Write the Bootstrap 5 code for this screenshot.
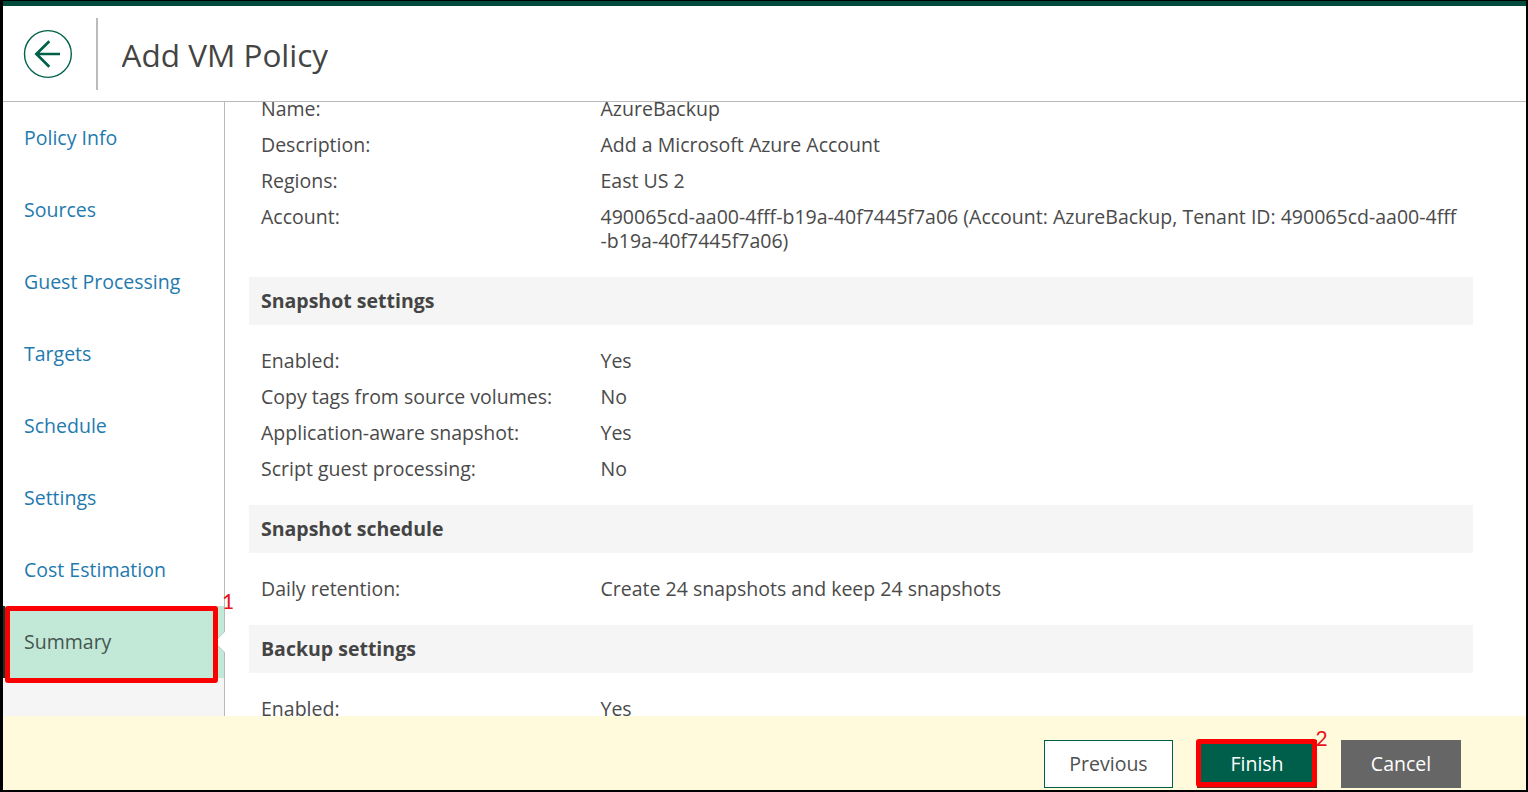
<!DOCTYPE html>
<html lang="en">
<head>
<meta charset="utf-8">
<title>Add VM Policy</title>
<link href="https://cdn.jsdelivr.net/npm/bootstrap@5.3.0/dist/css/bootstrap.min.css" rel="stylesheet">
<style>
  body { font-family: "Open Sans", "Noto Sans", sans-serif; font-size: 19.52px; line-height: 24px; color: #4a4a4a; background: #000; }
  .app-frame { height: 792px; border: solid #000; border-width: 1px 2px 2px 3px; background: #fff; }
  .page-head { height: 101px; border-top: 5px solid #004b3c; border-bottom: 1px solid #b7b9bb; padding-left: 20px; }
  .head-rule { width: 2px; height: 72px; background: #bbb; margin-left: 23px; }
  .page-title { font-size: 31.5px; line-height: 36px; height: 37px; margin: 3px 0 0 23.5px; color: #444; }
  .side { width: 222px; border-right: 1px solid #b7b9bb; background: #f5f5f5; }
  .step { height: 72px; padding-left: 21px; background: #fff; color: #1f7aae; text-decoration: none; }
  .step.current { background: #c2e8d8; color: #475650; border-left: 2px solid #12372c; padding-left: 19px; }
  .notch { left: 209px; top: 25px; width: 11px; height: 22px; }
  .mark-box { border: 5px solid #fa0000; border-radius: 3px; }
  .mark-box.on-step { left: 0; top: 0; width: 213px; height: 77px; z-index: 2; }
  .mark-box.on-finish { left: -1px; top: -1px; width: 121px; height: 48px; }
  .mark-no { color: #e8141c; font: 21px/24px Lato, sans-serif; z-index: 3; }
  .mark-no.one { left: 217px; top: -17px; }
  .mark-no.two { left: 118.5px; top: -14px; }
  .summary { padding: 0 53px 0 24px; }
  .summary-list { margin-top: -5px; }
  .kv { display: flex; padding-left: 12px; margin-bottom: 12px; white-space: nowrap; }
  .kv dt { width: 339.5px; flex: none; font-weight: 400; }
  .kv dd { margin: 0; }
  .group-title { font-size: 19.5px; font-weight: 700; line-height: 48px; background: #f5f5f5; padding-left: 12px; margin: 24px 0; color: #444; }
  .page-foot { height: 74px; background: #fffadc; padding: 24px 65px 0 0; gap: 24px; }
  .page-foot .btn { height: 48px; width: 120px; padding: 0; border-radius: 0; font-size: 19.5px; line-height: 46px; }
  .page-foot .btn-prev { width: 129px; background: #fff; border: 1px solid #00604a; color: #505050; }
  .page-foot .btn-done { background: #005f4b; border-color: #005f4b; color: #fff; border-bottom-color: #7a2a1c; }
  .page-foot .btn-quit { background: #666; border-color: #666; color: #fff; }
</style>
</head>
<body>
<div class="app-frame d-flex flex-column overflow-hidden">
  <header class="page-head d-flex align-items-center flex-shrink-0">
    <svg width="50" height="50" viewBox="0 0 50 50" fill="none" stroke="#00604a">
      <circle cx="24.9" cy="25" r="23.4" stroke-width="1.4"/>
      <path d="M37 25H13M26.3 12.3 13.4 25 26.3 37.7" stroke-width="2.7"/>
    </svg>
    <div class="head-rule"></div>
    <h1 class="page-title overflow-hidden fw-normal">Add VM Policy</h1>
  </header>

  <div class="d-flex flex-grow-1" style="min-height:0">
    <nav class="side flex-shrink-0 d-flex flex-column">
      <a class="step d-flex align-items-center" href="#">Policy Info</a>
      <a class="step d-flex align-items-center" href="#">Sources</a>
      <a class="step d-flex align-items-center" href="#">Guest Processing</a>
      <a class="step d-flex align-items-center" href="#">Targets</a>
      <a class="step d-flex align-items-center" href="#">Schedule</a>
      <a class="step d-flex align-items-center" href="#">Settings</a>
      <a class="step d-flex align-items-center" href="#">Cost Estimation</a>
      <a class="step current d-flex align-items-center position-relative" href="#">Summary
        <svg class="notch position-absolute" viewBox="0 0 11 22">
          <path d="M0 11 11 .3V21.7Z" fill="#fff"/>
          <path d="M10.8.5 0 11 10.8 21.5" fill="none" stroke="#b7c4be" stroke-width=".9"/>
        </svg>
        <span class="mark-box on-step position-absolute"></span>
        <span class="mark-no one position-absolute">1</span>
      </a>
    </nav>

    <main class="summary flex-grow-1 overflow-hidden">
      <dl class="summary-list">
        <div class="kv"><dt>Name:</dt><dd>AzureBackup</dd></div>
        <div class="kv"><dt>Description:</dt><dd>Add a Microsoft Azure Account</dd></div>
        <div class="kv"><dt>Regions:</dt><dd>East US 2</dd></div>
        <div class="kv"><dt>Account:</dt><dd>490065cd-aa00-4fff-b19a-40f7445f7a06 (Account: AzureBackup, Tenant ID: 490065cd-aa00-4fff<br>-b19a-40f7445f7a06)</dd></div>
        <h2 class="group-title">Snapshot settings</h2>
        <div class="kv"><dt>Enabled:</dt><dd>Yes</dd></div>
        <div class="kv"><dt>Copy tags from source volumes:</dt><dd>No</dd></div>
        <div class="kv"><dt>Application-aware snapshot:</dt><dd>Yes</dd></div>
        <div class="kv"><dt>Script guest processing:</dt><dd>No</dd></div>
        <h2 class="group-title">Snapshot schedule</h2>
        <div class="kv"><dt>Daily retention:</dt><dd>Create 24 snapshots and keep 24 snapshots</dd></div>
        <h2 class="group-title">Backup settings</h2>
        <div class="kv"><dt>Enabled:</dt><dd>Yes</dd></div>
      </dl>
    </main>
  </div>

  <footer class="page-foot d-flex justify-content-end flex-shrink-0">
    <button class="btn btn-prev" type="button">Previous</button>
    <div class="position-relative">
      <button class="btn btn-done" type="button">Finish</button>
      <span class="mark-box on-finish position-absolute"></span>
      <span class="mark-no two position-absolute">2</span>
    </div>
    <button class="btn btn-quit" type="button">Cancel</button>
  </footer>
</div>
<script src="https://cdn.jsdelivr.net/npm/bootstrap@5.3.0/dist/js/bootstrap.bundle.min.js"></script>
</body>
</html>
